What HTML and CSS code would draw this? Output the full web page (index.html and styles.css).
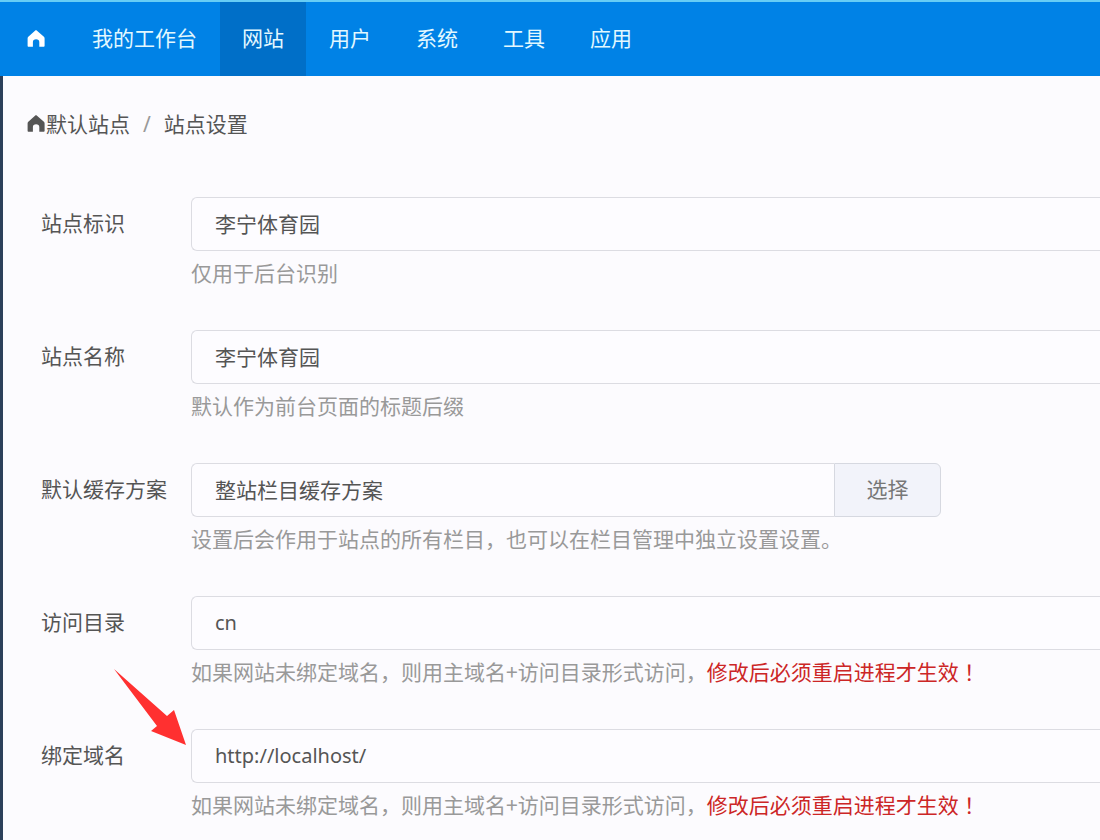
FILE: index.html
```html
<!DOCTYPE html>
<html lang="zh-CN">
<head>
<meta charset="utf-8">
<title>站点设置</title>
<link rel="stylesheet" href="styles.css">
</head>
<body>
<nav class="nav">
  <a class="nav-item nav-home" href="#" aria-label="首页"><svg class="home" viewBox="0 0 18 18" aria-hidden="true"><path d="M8 .8c.7-.6 1.300-.6 2 0L16.900 6.800c.5.5.7 1 .7 1.700v7.200c0 .7-.4 1.100-1.100 1.100H12.300v-4.800c0-1.800-1.200-2.800-3.200-2.800S5.900 10.200 5.900 12v4.800H1.700c-.7 0-1.100-.4-1.100-1.100V8.500c0-.7.2-1.200.7-1.700Z"/></svg></a>
  <a class="nav-item" href="#">我的工作台</a>
  <a class="nav-item active" href="#" aria-current="page">网站</a>
  <a class="nav-item" href="#">用户</a>
  <a class="nav-item" href="#">系统</a>
  <a class="nav-item" href="#">工具</a>
  <a class="nav-item" href="#">应用</a>
</nav>
<main class="content">
  <div class="crumbs">
    <a class="crumb" href="#"><svg class="home" viewBox="0 0 18 18" aria-hidden="true"><path d="M8 .8c.7-.6 1.300-.6 2 0L16.900 6.800c.5.5.7 1 .7 1.700v7.200c0 .7-.4 1.100-1.100 1.100H12.300v-4.800c0-1.800-1.200-2.800-3.200-2.800S5.900 10.200 5.900 12v4.800H1.700c-.7 0-1.100-.4-1.100-1.100V8.500c0-.7.2-1.200.7-1.700Z"/></svg>默认站点</a>
    <span class="slash">/</span>
    <span>站点设置</span>
  </div>
  <form class="form">
    <div class="row">
      <label class="label" for="mark">站点标识</label>
      <div class="field">
        <input class="input" id="mark" type="text" value="李宁体育园">
        <p class="hint">仅用于后台识别</p>
      </div>
    </div>
    <div class="row">
      <label class="label" for="name">站点名称</label>
      <div class="field">
        <input class="input" id="name" type="text" value="李宁体育园">
        <p class="hint">默认作为前台页面的标题后缀</p>
      </div>
    </div>
    <div class="row">
      <label class="label" for="cache">默认缓存方案</label>
      <div class="field">
        <div class="group">
          <input class="input" id="cache" type="text" value="整站栏目缓存方案">
          <button class="pick" type="button">选择</button>
        </div>
        <p class="hint">设置后会作用于站点的所有栏目，也可以在栏目管理中独立设置设置。</p>
      </div>
    </div>
    <div class="row">
      <label class="label" for="dir">访问目录</label>
      <div class="field">
        <input class="input latin" id="dir" type="text" value="cn">
        <p class="hint">如果网站未绑定域名，则用主域名+访问目录形式访问，<span class="warn">修改后必须重启进程才生效<span class="mark" lang="zh-TW">！</span></span></p>
      </div>
    </div>
    <div class="row">
      <label class="label" for="domain">绑定域名</label>
      <div class="field">
        <input class="input latin" id="domain" type="text" value="http://localhost/">
        <p class="hint">如果网站未绑定域名，则用主域名+访问目录形式访问，<span class="warn">修改后必须重启进程才生效<span class="mark" lang="zh-TW">！</span></span></p>
      </div>
      <svg class="arrow" viewBox="0 0 73 77" aria-hidden="true"><path d="M0 0 53 47 60 41 72 76 37 62 43 57Z"/></svg>
    </div>
  </form>
</main>
</body>
</html>
```
FILE: styles.css
```css
* {
  box-sizing: border-box;
}

body {
  margin: 0;
  min-height: 100vh;
  display: flex;
  flex-direction: column;
  background: #fcfbfe;
  color: #555;
  font-family: "Noto Sans", "Noto Sans CJK SC", sans-serif;
  font-size: 21px;
  line-height: 30px;
}

a {
  color: inherit;
  text-decoration: none;
}

.home {
  width: 18px;
  height: 18px;
  fill: currentColor;
}

.nav {
  display: flex;
  gap: 1px;
  height: 76px;
  border-top: 2px solid #67cdf5;
  background: #0082e6;
  color: #e2f8ff;
}

.nav-item {
  display: flex;
  align-items: center;
  padding: 0 22px 2px;
}

.nav-home {
  padding: 0 24px 0 27px;
  color: #fff;
}

.active {
  background: #006fc8;
}

.content {
  flex: 1;
  padding-top: 33px;
  border-left: 3px solid #2c405a;
  overflow: hidden;
}

.crumbs {
  display: flex;
  gap: 13px;
  padding-left: 24px;
}

.crumb {
  display: flex;
  align-items: center;
  gap: 1px;
}

.slash {
  color: #999;
}

.form {
  margin-top: 58px;
  padding-left: 38px;
}

.row {
  position: relative;
  display: grid;
  grid-template-columns: 150px 1fr;
  margin-bottom: 37px;
}

.row:last-child {
  margin-bottom: 0;
}

.label {
  line-height: 52px;
}

.input {
  display: block;
  width: 100%;
  height: 54px;
  padding: 0 23px 2px;
  border: 1px solid #dcdce2;
  border-right: 0;
  border-radius: 6px 0 0 6px;
  background: #fdfcff;
  color: #555;
  font: inherit;
}

.latin {
  font-size: 20px;
}

.group {
  display: flex;
  max-width: 750px;
}

.group .input {
  flex: 1;
}

.pick {
  width: 107px;
  padding: 0 0 2px;
  border: 1px solid #d6d8e0;
  border-radius: 0 6px 6px 0;
  background: #f2f3fa;
  color: #777;
  font: inherit;
}

.hint {
  margin: 0;
  color: #999;
  font-family: "Noto Sans CJK SC", sans-serif;
  line-height: 42px;
  white-space: nowrap;
}

.warn {
  color: #cc2626;
}

.mark {
  font-family: "Noto Sans CJK TC", sans-serif;
  line-height: 1;
}

.arrow {
  position: absolute;
  left: 73px;
  top: -60px;
  width: 73px;
  height: 77px;
  fill: #ff3030;
}
```
